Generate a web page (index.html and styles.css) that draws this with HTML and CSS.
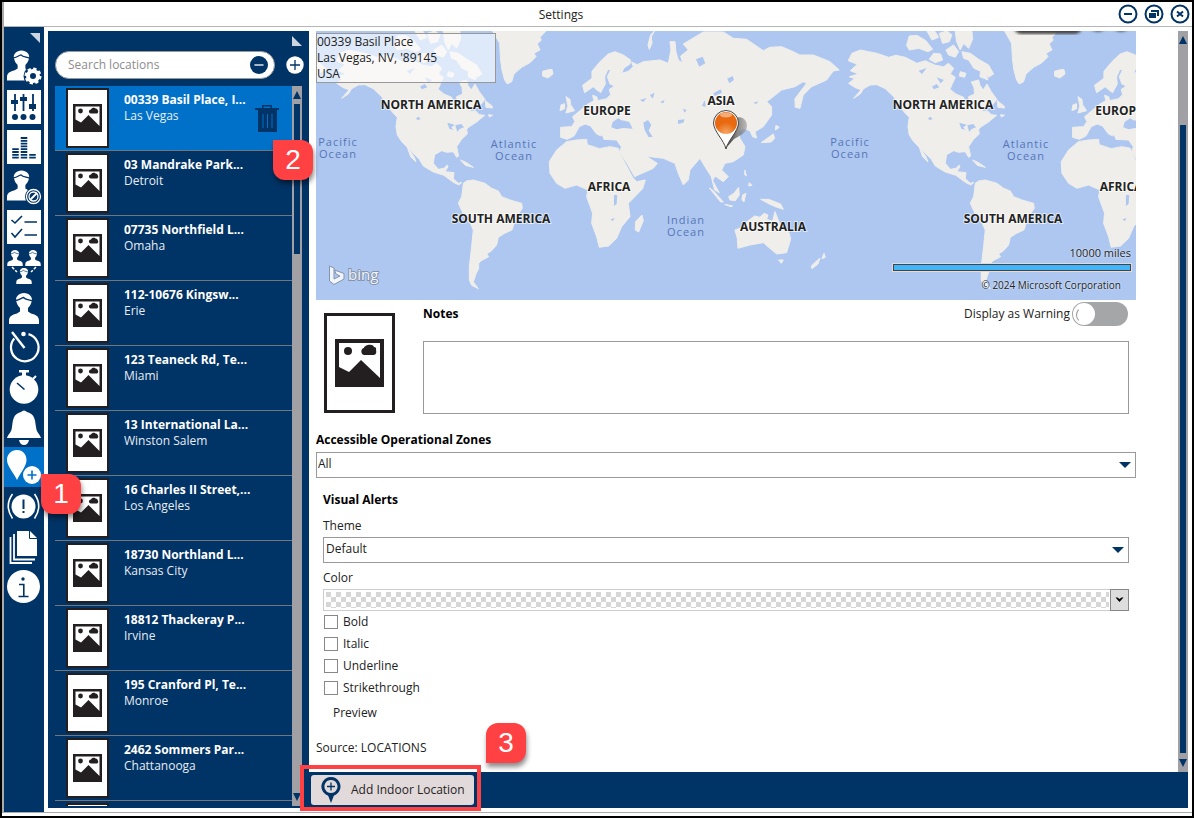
FILE: index.html
```html
<!DOCTYPE html>
<html lang="en">
<head>
<meta charset="utf-8">
<title>Settings</title>
<link rel="stylesheet" href="styles.css">
</head>
<body>
<svg class="defs" aria-hidden="true">
  <defs>
    <symbol id="person" viewBox="0 0 30 31">
      <path fill="#fff" d="M0 31V28C0 23 3 22 8 20.500L11 18.500V15C9 13 8 11 7.500 9C5.500 4 10 0 15 0S24.500 4 22.500 9C22 11 21 13 19 15V18.500L22 20.500C27 22 30 23 30 28V31Z"/>
      <path fill="none" stroke="#003366" stroke-width="1.300" d="M6.500 7.500C11 7 12 5 14.500 4.500C16.500 7 20 6.500 23.500 8"/>
    </symbol>
    <symbol id="placeholder" viewBox="0 0 43 60">
      <path fill="#fff" stroke="#231f20" stroke-width="2" d="M1 1H42V59H1Z"/>
      <path fill="#231f20" d="M7 16H36V44H7Z"/>
      <path fill="#fff" d="M9.500 18.500H33.500V38L22.500 27L15 34.500L9.500 31.500Z"/>
      <circle cx="14.500" cy="23" r="2.400" fill="#231f20"/>
      <path fill="#231f20" d="M25 25.500C22 25 22.500 21.500 25 21.500C25.500 19.500 29 19 29.500 20.500C31.500 20.500 31.500 22 31.500 22C33 23.500 32 25.500 30.500 25.500Z"/>
    </symbol>
    <g id="world">
      <g fill="#f0eeea" stroke="#f0eeea" stroke-width="3" stroke-linejoin="round">
        <path d="M79 182L90 160L115 150L140 155L165 160L200 172L222 166L250 172L285 190L310 182L340 196L365 200L380 190L395 205L385 222L400 232L392 250L384 268L402 282L425 292L432 312L442 308L440 290L458 282L456 262L448 246L470 240L474 256L484 270L495 252L508 275L525 298L514 312L490 322L478 336L496 332L508 344L524 346L500 366L478 380L470 388L472 402L455 418L440 440L446 468L440 472L430 455L410 457L395 452L374 464L370 490L385 508L402 505L412 495L414 500L405 515L432 518L430 536L445 550L456 547L447 555L430 547L402 526L370 516L340 498L328 478L306 455L292 440L312 470L318 486L302 470L292 442L275 425L262 405L258 380L262 352L250 340L235 320L215 290L190 266L165 254L145 255L125 266L115 282L95 295L117 270L98 262L80 250L98 236L82 230L110 222L85 212L106 193Z"/>
        <path d="M526 302L546 318L548 324L528 322ZM536 344L548 346L538 351ZM262 108L285 106L312 122L332 148L318 155L290 145L262 150L254 136ZM315 93L340 95L350 112L330 120ZM352 100L375 93L390 105L382 125L362 130ZM400 93L450 93L452 118L440 145L425 130L415 150L404 125ZM395 135L410 155L400 172L380 165L372 150ZM420 155L445 160L470 178L500 195L515 222L500 232L492 220L498 240L474 230L476 214L456 205L440 180L425 175ZM335 160L356 162L362 180L340 188L322 178ZM415 215L432 220L428 232L412 228ZM452 480L470 488L490 502L466 496Z"/>
        <path d="M548 93L569 130L572 180L576 210L584 240L592 252L605 245L612 222L635 202L660 188L678 170L672 160L690 150L682 132L694 120L690 112L708 93Z"/>
        <path d="M698 214L712 210L726 208L729 222L714 234L698 228Z"/>
        <path d="M460 550L470 543L490 540L525 550L545 565L565 573L575 590L600 600L635 610L637 625L622 648L615 662L606 690L584 700L565 712L560 735L545 752L530 762L536 770L514 782L506 790L506 806L498 822L490 846L505 866L485 856L478 840L478 800L485 740L490 690L482 672L465 652L445 610L455 590L458 570Z"/>
        <path d="M768 290L780 298L782 314L794 332L768 339L774 318ZM753 315L764 311L764 326L750 332Z"/>
        <path d="M895 162L915 155L940 165L962 180L960 192L942 204L935 220L955 214L970 200L965 186L982 194L1000 185L1050 180L1075 190L1083 150L1080 125L1095 125L1098 156L1105 180L1118 190L1112 168L1135 150L1120 132L1160 108L1180 96L1240 96L1270 115L1310 118L1335 135L1360 152L1380 142L1415 140L1450 155L1470 165L1510 165L1560 185L1588 210L1570 213L1550 240L1505 260L1480 285L1470 325L1456 322L1455 296L1490 250L1480 245L1455 260L1415 270L1390 290L1370 305L1385 320L1385 345L1360 380L1335 395L1340 414L1328 410L1320 392L1300 385L1285 395L1290 415L1305 440L1300 465L1270 485L1245 490L1235 510L1255 530L1240 545L1215 528L1208 542L1228 578L1214 570L1204 530L1185 500L1170 475L1140 510L1135 540L1120 555L1105 520L1095 490L1060 475L1020 470L1010 462L1018 475L1042 490L1030 505L985 525L974 530L950 488L930 458L934 440L920 420L882 418L875 398L862 404L846 380L878 402L872 408L858 400L842 378L826 372L808 380L792 408L772 418L752 412L752 382L785 380L795 365L788 350L810 332L834 312L852 302L848 286L860 290L864 302L890 296L902 284L898 268L914 258L900 252L892 230L902 210L894 208L884 230L886 252L872 278L856 266L850 260L824 278L818 256L846 235L846 214L870 185Z"/>
        <path d="M770 425L800 420L830 418L832 434L868 446L900 440L925 445L935 470L968 532L980 545L1006 540L998 566L955 610L960 650L935 680L920 715L896 738L868 742L860 710L845 670L848 640L830 590L834 570L800 555L765 565L740 550L720 520L718 485L740 450Z"/>
        <path d="M977 665L996 645L1000 662L986 696L976 690Z"/>
        <path d="M1275 690L1292 684L1310 666L1334 648L1350 652L1362 640L1374 645L1370 658L1388 664L1395 635L1408 668L1438 700L1442 718L1430 758L1400 762L1388 752L1374 740L1360 728L1320 735L1284 745L1282 715ZM1406 780L1420 780L1414 790Z"/>
        <path d="M1198 564L1210 572L1240 606L1232 606ZM1244 613L1268 618L1262 620ZM1256 590L1272 580L1286 562L1288 585L1276 602L1260 600ZM1298 585L1308 580L1302 606L1296 600ZM1352 598L1376 598L1412 612L1420 628L1396 620L1378 612ZM1305 510L1309 528L1304 524ZM1318 548L1326 556L1316 558ZM1390 402L1394 415L1384 426L1354 428L1376 412ZM1398 376L1408 382L1396 390ZM1542 760L1546 772L1536 776ZM1530 774L1524 792L1506 806L1504 798ZM1034 93L1024 110L1026 130L1018 148L1014 135L1022 105Z"/>
      </g>
      <g fill="#adc7f1">
        <path d="M904 382L908 366L925 355L942 366L935 360L958 366L968 386L940 384L920 388ZM1000 368L1014 360L1024 374L1016 392L1028 410L1016 412L1004 390ZM1158 178L1178 170L1186 190L1168 200ZM1252 236L1268 228L1272 240L1258 250ZM1210 280L1232 268L1236 278L1214 288ZM1176 318L1188 320L1184 300ZM1104 360L1124 358L1120 368L1104 372ZM1330 308L1344 304L1340 312ZM1050 306L1064 300L1060 310ZM990 300L1010 294L1000 306ZM1020 285L1034 278L1028 296ZM912 585L922 585L920 612L912 618ZM902 658L914 654L908 664ZM1118 326L1130 330L1124 338Z"/>
        <path d="M412 368L434 374L424 382L430 390L418 386ZM436 376L454 372L462 382L448 388L442 396ZM318 355L326 350L332 358L322 360ZM368 296L372 310L366 302ZM330 260L344 252L352 262L336 268ZM290 212L314 204L300 222ZM344 232L366 240L356 250Z"/>
      </g>
    </g>
    <g id="map-labels">
      <g class="map-continent">
        <text x="115" y="78">NORTH AMERICA</text>
        <text x="185" y="192">SOUTH AMERICA</text>
        <text x="291" y="84">EUROPE</text>
        <text x="293" y="160">AFRICA</text>
        <text x="405" y="74">ASIA</text>
        <text x="457" y="200">AUSTRALIA</text>
      </g>
      <g class="map-ocean">
        <text x="22" y="115">Pacific</text><text x="22" y="127">Ocean</text>
        <text x="198" y="117">Atlantic</text><text x="198" y="129">Ocean</text>
        <text x="370" y="193">Indian</text><text x="370" y="205">Ocean</text>
      </g>
    </g>
    <radialGradient id="pin-fill" cx=".5" cy=".95" r=".8">
      <stop offset="0" stop-color="#f6a868"/><stop offset=".6" stop-color="#e8690f"/><stop offset="1" stop-color="#e8690f"/>
    </radialGradient>
    <linearGradient id="pin-shade" x1="0" x2="1">
      <stop offset="0" stop-color="#333"/><stop offset="1" stop-color="#999" stop-opacity=".6"/>
    </linearGradient>
  </defs>
</svg>

<div class="window">
  <header class="titlebar">
    <h1 class="title">Settings</h1>
    <div class="window-buttons">
      <button type="button" aria-label="Minimize"><svg viewBox="0 0 20 20"><circle cx="10" cy="10" r="8.500"/><path d="M6 10H14"/></svg></button>
      <button type="button" aria-label="Restore"><svg viewBox="0 0 20 20"><circle cx="10" cy="10" r="8.500"/><path fill="#003366" stroke="none" d="M5 9H12V14H5ZM7 6H15V12H13V8H7Z"/></svg></button>
      <button type="button" aria-label="Close"><svg viewBox="0 0 20 20"><circle cx="10" cy="10" r="8.500"/><path d="M7 7.500L13 12.500M13 7.500L7 12.500"/></svg></button>
    </div>
  </header>

  <div class="workspace">
    <nav class="rail" aria-label="Settings sections">
      <div class="rail-top"><svg width="10" height="10" viewBox="0 0 10 10"><path d="M0 0H10V10Z" fill="#ccd6e0"/></svg></div>
      <button type="button" aria-label="User settings"><svg viewBox="0 0 36 36"><use href="#person" x="1" y="1" width="29" height="31"/><circle cx="27" cy="27" r="9.500" fill="#003366"/><circle cx="27" cy="27" r="5" fill="none" stroke="#fff" stroke-width="4"/><circle cx="27" cy="27" r="7.300" fill="none" stroke="#fff" stroke-width="2.400" stroke-dasharray="3.300 2.430"/></svg></button>
      <button type="button" aria-label="Preferences"><svg viewBox="0 0 36 36"><path fill="#fff" d="M1 1H35V35H1Z"/><path stroke="#003366" stroke-width="1.800" d="M9 5V22M17.500 5V22M27 5V22"/><path fill="#003366" d="M5 11H12V15H5ZM14 8H21V12H14ZM23 15H30V20H23Z"/><g fill="#003366"><circle cx="9" cy="28" r="3"/><circle cx="17.500" cy="28" r="3"/><circle cx="26.500" cy="28" r="3"/></g></svg></button>
      <button type="button" aria-label="Levels"><svg viewBox="0 0 36 36"><path fill="#fff" d="M1 1H35V35H1Z"/><g fill="none" stroke="#003366" stroke-width="6.500" stroke-dasharray="1.800 1"><path d="M9.500 29.500V18.500"/><path d="M18 29.500V7"/><path d="M26.500 29.500V25"/></g></svg></button>
      <button type="button" aria-label="Blocked users"><svg viewBox="0 0 36 36"><use href="#person" x="1" y="1" width="29" height="31"/><circle cx="27.500" cy="27.500" r="8.500" fill="#003366"/><circle cx="27.500" cy="27.500" r="7" fill="none" stroke="#fff" stroke-width="1.300"/><circle cx="27.500" cy="27.500" r="4.500" fill="none" stroke="#fff" stroke-width="1.300"/><path stroke="#fff" stroke-width="2" d="M24 31L31 24"/></svg></button>
      <button type="button" aria-label="Checklists"><svg viewBox="0 0 36 36"><path fill="#fff" d="M1 1H35V35H1Z"/><path fill="none" stroke="#003366" stroke-width="1.600" d="M5.500 11L9 14L16 7M18.500 13H31M5.500 24L9 28L16 20M18.500 26H31"/></svg></button>
      <button type="button" aria-label="Groups"><svg viewBox="0 0 36 36"><use href="#person" x="1" y="1" width="16" height="16"/><use href="#person" x="19" y="1" width="16" height="16"/><use href="#person" x="10" y="19" width="16" height="16"/><path stroke="#fff" stroke-width="1.500" stroke-dasharray="3 1.500" d="M6 18L11 23M30 18L25 23"/></svg></button>
      <button type="button" aria-label="Person"><svg viewBox="0 0 36 36"><use href="#person" x="3" y="4" width="30" height="31"/></svg></button>
      <button type="button" aria-label="Timers"><svg viewBox="0 0 36 36"><path fill="none" stroke="#fff" stroke-width="2.300" d="M8.300 9.500A13.800 13.800 0 1 0 22.500 5.200"/><path stroke="#fff" stroke-width="2.400" d="M6 3L18.500 19"/><circle cx="17.500" cy="5" r="2.300" fill="#fff"/></svg></button>
      <button type="button" aria-label="Stopwatch"><svg viewBox="0 0 36 36"><circle cx="18" cy="20.500" r="14.300" fill="#fff"/><path fill="#fff" d="M13 1H23V3.500H20V8H16V3.500H13Z"/><path stroke="#fff" stroke-width="2" d="M27 10L30 7"/><path stroke="#003366" stroke-width="1.600" d="M11 14L18.500 20.500"/></svg></button>
      <button type="button" aria-label="Notifications"><svg viewBox="0 0 36 36"><path fill="#fff" d="M15 3Q18 0 21 3C29 5 29 11 30 18C30.500 24 34 25 35 29H1C2 25 5.500 24 6 18C7 11 7 5 15 3ZM13 31H23Q22 36 18 36T13 31Z"/></svg></button>
      <button type="button" class="active" aria-label="Locations"><svg viewBox="0 0 36 36"><path fill="#fff" d="M11 1C17 1 20.500 5.500 20.500 11C20.500 17 15 23 11 31C7 23 1 17 1 11C1 5.500 5 1 11 1Z"/><circle cx="26" cy="26" r="10" fill="#0071c9"/><circle cx="26" cy="26" r="9" fill="#fff"/><path stroke="#0071c9" stroke-width="1.600" d="M21.500 26H30.500M26 21.500V30.500"/></svg></button>
      <button type="button" aria-label="Alerts"><svg viewBox="0 0 36 36"><circle cx="17.500" cy="17.500" r="12" fill="#fff"/><path fill="none" stroke="#fff" stroke-width="1.600" d="M6.500 5Q-2 17 6.500 29.500M28.500 5Q37 17 28.500 29.500"/><path stroke="#003366" stroke-width="2" d="M17.500 10.500V20M17.500 22V24"/></svg></button>
      <button type="button" aria-label="Documents"><svg viewBox="0 0 36 36"><path fill="#fff" d="M11 2H24L31 9V27H11Z"/><path fill="none" stroke="#003366" d="M23.500 2V9.500H31"/><path fill="none" stroke="#fff" stroke-width="1.800" d="M8 5V30.500H29M4.500 8V34H26"/></svg></button>
      <button type="button" aria-label="Information"><svg viewBox="0 0 36 36"><circle cx="17.500" cy="17.500" r="16.500" fill="#fff"/><circle cx="17" cy="10" r="1.700" fill="#003366"/><path fill="none" stroke="#003366" stroke-width="1.600" d="M13 15.500H17.800V27.500M12.500 27.500H22.500"/></svg></button>
      <span class="callout callout-one">1</span>
    </nav>

    <div class="content">
      <aside class="locations">
        <div class="locations-top"><svg width="10" height="10" viewBox="0 0 10 10"><path d="M0 0L10 10H0Z" fill="#ccd6e0"/></svg></div>
        <div class="search-row">
          <div class="search">
            <input type="text" aria-label="Search locations" placeholder="Search locations">
            <button type="button" aria-label="Clear search"><svg viewBox="0 0 18 18"><circle cx="9" cy="9" r="9" fill="#003366"/><path stroke="#fff" stroke-width="1.300" d="M4.500 9H13.500"/></svg></button>
          </div>
          <button type="button" class="add" aria-label="Add location"><svg viewBox="0 0 18 18"><circle cx="9" cy="9" r="8.700" fill="#fff"/><path stroke="#003366" stroke-width="1.300" d="M4 9H14M9 4V14"/></svg></button>
        </div>
        <div class="list-wrap">
          <ul class="list">
            <li class="item selected"><svg class="thumb"><use href="#placeholder"/></svg><div class="item-text"><strong>00339 Basil Place, I...</strong><span>Las Vegas</span></div><button type="button" class="delete" aria-label="Delete location"><svg viewBox="0 0 24 28"><path fill="#003366" d="M0 3H7V0H17V3H24V5H22V27H3V5H0ZM8.500 1.500V3H15.500V1.500Z"/><path stroke="#0071c9" d="M8 9V23M12.500 9V23M17 9V23"/></svg></button></li>
            <li class="item"><svg class="thumb"><use href="#placeholder"/></svg><div class="item-text"><strong>03 Mandrake Park...</strong><span>Detroit</span></div></li>
            <li class="item"><svg class="thumb"><use href="#placeholder"/></svg><div class="item-text"><strong>07735 Northfield L...</strong><span>Omaha</span></div></li>
            <li class="item"><svg class="thumb"><use href="#placeholder"/></svg><div class="item-text"><strong>112-10676 Kingsw...</strong><span>Erie</span></div></li>
            <li class="item"><svg class="thumb"><use href="#placeholder"/></svg><div class="item-text"><strong>123 Teaneck Rd, Te...</strong><span>Miami</span></div></li>
            <li class="item"><svg class="thumb"><use href="#placeholder"/></svg><div class="item-text"><strong>13 International La...</strong><span>Winston Salem</span></div></li>
            <li class="item"><svg class="thumb"><use href="#placeholder"/></svg><div class="item-text"><strong>16 Charles II Street,...</strong><span>Los Angeles</span></div></li>
            <li class="item"><svg class="thumb"><use href="#placeholder"/></svg><div class="item-text"><strong>18730 Northland L...</strong><span>Kansas City</span></div></li>
            <li class="item"><svg class="thumb"><use href="#placeholder"/></svg><div class="item-text"><strong>18812 Thackeray P...</strong><span>Irvine</span></div></li>
            <li class="item"><svg class="thumb"><use href="#placeholder"/></svg><div class="item-text"><strong>195 Cranford Pl, Te...</strong><span>Monroe</span></div></li>
            <li class="item"><svg class="thumb"><use href="#placeholder"/></svg><div class="item-text"><strong>2462 Sommers Par...</strong><span>Chattanooga</span></div></li>
            <li class="item"><svg class="thumb"><use href="#placeholder"/></svg></li>
          </ul>
          <div class="scrollbar list-scroll"><svg class="arrow" viewBox="0 0 8 8"><path d="M0 8L4 0L8 8Z"/></svg><span class="scroll-thumb"></span><span class="scroll-rest"></span><svg class="arrow" viewBox="0 0 8 8"><path d="M0 0H8L4 8Z"/></svg></div>
          <span class="callout callout-two">2</span>
        </div>
      </aside>

      <main class="main">
        <div class="detail-wrap">
          <form class="detail">
            <section class="map" aria-label="Map">
              <svg class="map-art" width="100%" height="100%">
                <defs><filter id="soft"><feGaussianBlur stdDeviation="1.500"/></filter></defs>
                <rect width="100%" height="100%" fill="#adc7f1"/>
                <g transform="translate(-6 -31) scale(.3333)"><use href="#world" x="-1536"/><use href="#world"/><use href="#world" x="1536"/></g>
                <use href="#map-labels"/><use href="#map-labels" x="512"/>
                <g transform="translate(397 79)">
                  <path fill="url(#pin-shade)" d="M13 38L17 14C24 3 34 7 34 16C34 24 24 27 21 29Z"/>
                  <path fill="#fff" stroke="#444" d="M13 39C11 30 1 22 .500 13A12.500 12.500 0 0 1 25.500 13C25 22 15 30 13 39Z"/>
                  <circle cx="13" cy="13" r="11" fill="url(#pin-fill)"/>
                  <ellipse cx="13" cy="5" rx="6" ry="2.500" fill="#fff" opacity=".45"/>
                </g>
                <g stroke="#8494ad" fill="#f2f5fa"><path d="M13.500 235L18 237V248L24 245L20 243L18.500 239L28 242.500V248L18 253.500L13.500 250Z"/></g>
                <text class="bing" x="32" y="249">bing</text>
                <path filter="url(#soft)" fill="#444" d="M698 -3H766Q764 3 758 3H706Q700 3 698 -3ZM774 -3H790Q782 4 774 -3ZM797 -3H813Q805 4 797 -3Z"/>
              </svg>
              <address class="address">00339 Basil Place<br>Las Vegas, NV, '89145<br>USA</address>
              <div class="scale"><span>10000 miles</span><div class="scale-bar"></div><small>© 2024 Microsoft Corporation</small></div>
            </section>
            <div class="notes">
              <svg class="photo" viewBox="0 0 71 100"><path fill="#fff" stroke="#231f20" stroke-width="3" d="M1.500 1.500H69.500V98.500H1.500Z"/><path fill="#231f20" d="M11 26H60V74H11Z"/><path fill="#fff" d="M15 30H56V65L37 47L25 59L15 54Z"/><circle cx="24" cy="38" r="4" fill="#231f20"/><path fill="#231f20" d="M40 42C36 41 37 35 40 35C40 32 49 30 50 34C53 34 52 37 52 37C53 41 51 42 49 42Z"/></svg>
              <div class="notes-body">
                <div class="notes-head">
                  <label for="notes" class="strong">Notes</label>
                  <label class="toggle-label" for="warning">Display as Warning<input type="checkbox" id="warning" class="toggle"></label>
                </div>
                <textarea id="notes"></textarea>
              </div>
            </div>
            <label class="strong zones-label" for="zones">Accessible Operational Zones</label>
            <div class="select"><select id="zones"><option>All</option></select></div>
            <fieldset class="alerts">
              <legend class="strong">Visual Alerts</legend>
              <label for="theme" class="field-label">Theme</label>
              <div class="select"><select id="theme"><option>Default</option></select></div>
              <label for="color" class="field-label">Color</label>
              <div class="color"><div class="checker"></div><button type="button" id="color" aria-label="Color"><svg viewBox="0 0 9 6"><path d="M0.500 0.500H2.500L4.500 2L6.500 0.500H8.500L4.500 5Z"/></svg></button></div>
              <div class="checks">
                <label><input type="checkbox">Bold</label>
                <label><input type="checkbox">Italic</label>
                <label><input type="checkbox">Underline</label>
                <label><input type="checkbox">Strikethrough</label>
              </div>
              <p class="preview">Preview</p>
            </fieldset>
            <p class="source">Source: LOCATIONS</p>
          </form>
          <div class="scrollbar main-scroll"><svg class="arrow" viewBox="0 0 8 8"><path d="M0 8L4 0L8 8Z"/></svg><span class="scroll-rest"></span><span class="scroll-thumb"></span><svg class="arrow" viewBox="0 0 8 8"><path d="M0 0H8L4 8Z"/></svg></div>
        </div>
        <footer class="footer">
          <button type="button" class="add-indoor"><svg viewBox="0 0 20 26"><path fill="none" stroke="#003366" stroke-width="3" d="M10 1.500A8 8 0 1 1 9.900 1.500Z"/><path fill="#003366" d="M6.500 17H13.500L10 26Z"/><path stroke="#003366" stroke-width="1.300" d="M6 9.500H14M10 5.500V13.500"/></svg>Add Indoor Location</button>
          <span class="highlight"></span>
          <span class="callout callout-three">3</span>
        </footer>
      </main>
    </div>
  </div>
</div>
</body>
</html>
```
FILE: styles.css
```css
* { box-sizing: border-box; }

body {
  margin: 0;
  background: #000;
  color: #222;
  font: 12px/16px "Open Sans", "Noto Sans", sans-serif;
}

button, input, select, textarea { font: inherit; color: inherit; }
button { padding: 0; border: 0; background: none; cursor: pointer; }
button svg { display: block; }
p, h1, ul { margin: 0; padding: 0; }
.strong { font-weight: 700; color: #000; }
.defs { position: absolute; width: 0; height: 0; }

.window {
  display: flex;
  flex-direction: column;
  height: calc(100vh - 7px);
  margin: 2px 2px 5px;
  background: #fff;
  border-left: 2px solid #aaa;
  border-bottom: 1px solid #aaa;
  box-shadow: 0 3px #fff;
}

/* Title bar */
.titlebar {
  display: grid;
  grid-template-columns: 1fr auto 1fr;
  align-items: center;
  flex: none;
  height: 25px;
  border-bottom: 1px solid #b5b5b5;
}
.title { grid-column: 2; padding: 2px 74px 0 0; font-size: 12px; font-weight: 400; }
.window-buttons { display: flex; justify-content: flex-end; gap: 6px; padding-right: 2px; }
.window-buttons svg { width: 20px; height: 20px; fill: none; stroke: #003366; stroke-width: 2; }

.workspace { display: flex; flex: 1; min-height: 0; }

/* Icon rail */
.rail { position: relative; z-index: 3; flex: none; width: 40px; background: #003366; }
.rail-top { display: flex; justify-content: flex-end; height: 20px; padding: 6px 4px 0; }
.rail button { display: grid; place-items: center; width: 40px; height: 40px; }
.rail button svg { width: 36px; height: 36px; }
.rail .active { background: #0071c9; }

.content { display: flex; flex: 1; min-width: 0; padding: 4px; }

/* Locations */
.locations { display: flex; flex-direction: column; flex: none; width: 261px; padding: 0 7px 2px; background: #003366; }
.locations-top { display: flex; justify-content: flex-end; height: 20px; padding: 5px 0 0; }
.search-row { display: flex; flex: none; align-items: center; justify-content: space-between; margin-right: -2px; }
.search { display: flex; align-items: center; width: 220px; height: 28px; padding: 0 6px 0 12px; border: 1px solid #999; border-radius: 14px; background: #fff; }
.search input { flex: 1; min-width: 0; padding: 0; border: 0; outline: 0; background: none; }
.search input::placeholder { color: #8d8d8d; }
.search svg, .add svg { width: 18px; height: 18px; }
.list-wrap { position: relative; display: flex; flex: 1; min-height: 0; margin-top: 7px; }
.list { flex: 1; overflow: hidden; list-style: none; }
.item { display: flex; height: 65px; padding: 2px 11px; border-bottom: 1px solid #71777d; color: #e8edf3; }
.selected { background: #0071c9; }
.thumb { flex: none; width: 43px; height: 60px; }
.item-text { display: flex; flex: 1; flex-direction: column; padding: 4px 0 0 15px; white-space: nowrap; }
.item-text strong { color: #fff; }
.delete { align-self: flex-start; margin: 17px 2px 0 0; }
.delete svg { width: 24px; height: 28px; }

.scrollbar { display: flex; flex: none; flex-direction: column; align-items: center; width: 10px; padding: 5px 0; background: #a0a0a5; }
.arrow { flex: none; width: 8px; height: 8px; fill: #003366; }
.scroll-thumb { width: 6px; background: #003366; }
.scroll-rest { flex: 1; }
.list-scroll .scroll-thumb { height: 150px; margin-top: 5px; }
.main-scroll { margin-left: auto; }
.main-scroll .scroll-rest { flex: 81; }
.main-scroll .scroll-thumb { flex: 629; margin-bottom: 6px; }

/* Detail form */
.main { display: flex; flex: 1; flex-direction: column; min-width: 0; }
.detail-wrap { display: flex; flex: 1; min-height: 0; }
.detail { flex: 1; min-width: 0; margin-right: 42px; padding-left: 7px; overflow: hidden; }
.map { position: relative; height: 269px; overflow: hidden; }
.map-art { display: block; }
.map-continent { fill: #222; font-size: 12px; font-weight: 700; text-anchor: middle; paint-order: stroke; stroke: #fff; stroke-opacity: .6; stroke-width: 2px; }
.map-ocean { fill: #5775b5; font-size: 11px; text-anchor: middle; letter-spacing: 1px; }
.bing { fill: #f2f5fa; stroke: #8494ad; paint-order: stroke; stroke-width: 2px; font-size: 15px; }
.address { position: absolute; top: 2px; left: 0; width: 180px; border: 1px solid #999; background: rgba(255, 255, 255, .6); font-style: normal; }
.scale { position: absolute; right: 5px; bottom: 7px; display: flex; flex-direction: column; align-items: flex-end; width: 238px; font-size: 11px; text-shadow: 0 0 2px #fff; }
.scale-bar { width: 100%; height: 7px; margin: 3px 0 6px; border: 1px solid #444; outline: 1px solid #ddd; background: #42b4fa; }
.scale small { padding-right: 10px; font-size: 10px; }

.notes { display: flex; gap: 28px; padding: 2px 7px 0 8px; }
.photo { flex: none; width: 71px; height: 100px; margin-top: 11px; }
.notes-body { flex: 1; min-width: 0; }
.notes-head { display: flex; align-items: center; justify-content: space-between; height: 24px; }
.toggle-label { display: flex; align-items: center; gap: 2px; }
.toggle { position: relative; appearance: none; width: 56px; height: 24px; margin: 0 1px 0 0; border-radius: 12px; background: #a5a6a8; }
.toggle::before { content: ""; position: absolute; top: 1px; left: 1px; width: 22px; height: 22px; border-radius: 50%; background: #fff; }
.toggle::after { content: ""; position: absolute; top: 5px; left: 4px; width: 14px; height: 14px; border: 1px solid transparent; border-left-color: #999; border-radius: 50%; }
textarea { display: block; width: 100%; height: 73px; margin: 15px 0 0; border: 1px solid #999; border-radius: 0; resize: none; outline: 0; }
.zones-label { display: block; margin: 18px 0 4px; }

.select { position: relative; }
.select::after { content: ""; position: absolute; top: 10px; right: 5px; border: 6px solid transparent; border-top-color: #003366; border-bottom: 0; pointer-events: none; }
select { appearance: none; display: block; width: 100%; height: 26px; padding: 0 2px 2px 1px; border: 1px solid #999; border-radius: 0; background: #fff; }

.alerts { min-width: 0; margin: 14px 7px 0; padding: 0; border: 0; }
.alerts legend { padding: 0; margin-bottom: 10px; }
.field-label { display: block; margin-bottom: 3px; }
.alerts .select { margin-bottom: 7px; }
.alerts select { padding-left: 2px; }
.color { display: flex; height: 22px; border: 1px solid #ccc; }
.checker {
  flex: 1;
  margin: 2px;
  background: conic-gradient(#fff 25%, #d6d6d6 0 50%, #fff 0 75%, #d6d6d6 0) 0 0 / 10px 10px;
}
.color button { display: grid; place-items: center; width: 19px; margin: -1px; border: 1px solid #888; background: #ddd; }
.color svg { width: 9px; height: 6px; }
.checks { display: grid; }
.checks label { display: flex; align-items: center; gap: 5px; height: 22px; padding-left: 1px; }
.checks input { appearance: none; width: 14px; height: 14px; margin: 0; border: 1px solid #888; background: #fff; }
.preview { padding: 6px 0 0 10px; }
.source { margin-top: 19px; }

.footer { position: relative; display: flex; flex: none; height: 36px; padding: 3px 0 3px 2px; background: #003366; }
.add-indoor { display: flex; align-items: center; gap: 10px; width: 163px; padding-left: 10px; border-radius: 3px; background: #e2dada; white-space: nowrap; }
.add-indoor svg { flex: none; width: 20px; height: 26px; }

/* Numbered markers */
.callout { position: absolute; z-index: 2; display: grid; place-items: center; width: 40px; height: 40px; border-radius: 0 12px 12px 12px; background: #ff4144; box-shadow: 1px 4px 5px rgba(0, 0, 0, .45); color: #fff; font: 28px/40px "Liberation Sans", sans-serif; }
.callout-one { top: 447px; left: 37px; }
.callout-two { top: 54px; left: 218px; }
.callout-three { top: -49px; left: 177px; border-radius: 12px 12px 12px 0; }
.highlight { position: absolute; top: -7px; left: -9px; width: 181px; height: 46px; border: 4px solid #ff4144; pointer-events: none; }
```
